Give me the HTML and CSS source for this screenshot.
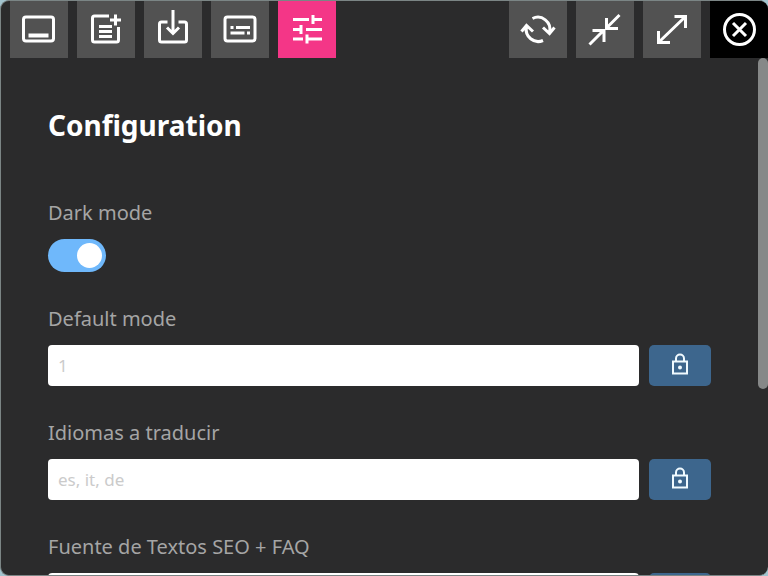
FILE: index.html
```
<!DOCTYPE html>
<html lang="en">
<head>
  <meta charset="UTF-8" />
  <meta name="viewport" content="width=device-width, initial-scale=1.0"/>
  <title>Configuration</title>
  <link rel="stylesheet" href="styles.css">
</head>
<body>
  <div class="window">
    <header class="toolbar">
      <button class="tool" aria-label="Panel">
        <svg viewBox="0 0 36 36"><rect x="2.5" y="7" width="30" height="24" rx="2.5"/><path class="thick" d="M7.500 25.5h20"/></svg>
      </button>
      <button class="tool" aria-label="New note">
        <svg viewBox="0 0 36 36"><path d="M21 6H6.500a2 2 0 0 0-2 2v22a2 2 0 0 0 2 2h22a2 2 0 0 0 2-2V17M11 16.500h13M11 21.500h13M11 26.500h13M27.500 4.500v11M22 10h11"/></svg>
      </button>
      <button class="tool" aria-label="Download">
        <svg viewBox="0 0 36 36"><path d="M12.500 12H6.500a2 2 0 0 0-2 2v16a2 2 0 0 0 2 2h23a2 2 0 0 0 2-2V14a2 2 0 0 0-2-2h-6M18 0v23M12 17.500l6 6 6-6"/></svg>
      </button>
      <button class="tool" aria-label="Subtitles">
        <svg viewBox="0 0 36 36"><rect x="3" y="7" width="30" height="24" rx="2.5"/><path d="M8.500 17.500h3M14 17.500h14M8.500 23h14M25 23h3"/></svg>
      </button>
      <button class="tool active" aria-label="Configuration">
        <svg viewBox="0 0 36 36"><path d="M4 9.500h16M24 5v9M24 9.500h9M4 19.500h8M12 15v9M17 19.500h16M4 29h10M18 24.500v9M18 29h15"/></svg>
      </button>
      <span class="spacer"></span>
      <button class="tool" aria-label="Refresh">
        <svg viewBox="0 0 36 36"><path d="M12.500 8.500A12 12 0 0 1 29.500 22M23 17.500l6.500 6 5-6M23 30.500A12 12 0 0 1 6.500 17M1.500 21.500l5-6 6.500 6"/></svg>
      </button>
      <button class="tool" aria-label="Shrink">
        <svg viewBox="0 0 36 36"><path d="M32.500 5L20 17.500M19.500 8v10.500H31M2.500 34.500l13-13M5.500 20.500H17V32"/></svg>
      </button>
      <button class="tool" aria-label="Expand">
        <svg viewBox="0 0 36 36"><path d="M5 32L31 7M20.500 6.500H31.500V18M4.500 21v11.500H16"/></svg>
      </button>
      <button class="tool close" aria-label="Close">
        <svg viewBox="0 0 36 36"><circle cx="18.500" cy="19.500" r="15"/><path d="M12 13l13 13M25 13L12 26"/></svg>
      </button>
    </header>

    <main class="content">
      <h1>Configuration</h1>
      <form>
        <div class="field">
          <label for="dark">Dark mode</label>
          <input type="checkbox" class="switch" id="dark" checked>
        </div>
        <div class="field">
          <label for="mode">Default mode</label>
          <div class="row">
            <input type="text" id="mode" placeholder="1">
            <button type="button" class="lock" aria-label="Lock">
              <svg viewBox="0 0 20 24"><path d="M3 9.500h14v12H3zM6 9.500V6.500a4 4 0 0 1 8 0v3"/><circle class="dot" cx="10" cy="15.500" r="2"/></svg>
            </button>
          </div>
        </div>
        <div class="field">
          <label for="langs">Idiomas a traducir</label>
          <div class="row">
            <input type="text" id="langs" placeholder="es, it, de">
            <button type="button" class="lock" aria-label="Lock">
              <svg viewBox="0 0 20 24"><path d="M3 9.500h14v12H3zM6 9.500V6.500a4 4 0 0 1 8 0v3"/><circle class="dot" cx="10" cy="15.500" r="2"/></svg>
            </button>
          </div>
        </div>
        <div class="field">
          <label for="source">Fuente de Textos SEO + FAQ</label>
          <div class="row">
            <input type="text" id="source">
            <button type="button" class="lock" aria-label="Lock"></button>
          </div>
        </div>
      </form>
      <div class="thumb"></div>
    </main>
  </div>
</body>
</html>
```
FILE: styles.css
```
* {
  box-sizing: border-box;
}

body {
  margin: 0;
  background: #a3c4cf;
  font-family: "Noto Sans", "Open Sans", sans-serif;
  color: #a5a5a5;
}

.window {
  height: 100vh;
  display: flex;
  flex-direction: column;
  overflow: hidden;
  background: #2b2b2c;
  border: 1px solid #7b8585;
  border-right: none;
  border-radius: 9px;
}

/* top bar */
.toolbar {
  display: flex;
  gap: 9px;
  padding-left: 9px;
}

.tool {
  width: 58px;
  height: 57px;
  padding: 0 0 4px;
  border: none;
  background: #525252;
  display: flex;
  align-items: center;
  justify-content: center;
  cursor: pointer;
}

.tool svg {
  width: 36px;
  height: 36px;
  fill: none;
  stroke: #fff;
  stroke-width: 3;
}

.tool .thick {
  stroke-width: 4;
}

.tool.active {
  background: #f43687;
}

.tool.close {
  background: #000;
}

.spacer {
  flex: 1;
}

/* settings */
.content {
  position: relative;
  flex: 1;
  min-height: 0;
  overflow: hidden;
  padding: 47px 57px 0 47px;
}

h1 {
  margin: 0 0 54px;
  font-size: 28px;
  line-height: 40px;
  color: #fff;
}

.field {
  margin-bottom: 33px;
}

label {
  display: block;
  margin-bottom: 12px;
  font-size: 20px;
  line-height: 28px;
}

.row {
  display: flex;
  gap: 10px;
}

input[type="text"] {
  flex: 1;
  min-width: 0;
  height: 41px;
  padding: 0 10px;
  border: none;
  border-radius: 4px;
  background: #fff;
  font-family: inherit;
  font-size: 17px;
}

input::placeholder {
  color: #cbcbcb;
}

.lock {
  width: 62px;
  height: 41px;
  padding: 0 0 3px;
  border: none;
  border-radius: 5px;
  background: #3d668d;
  display: flex;
  align-items: center;
  justify-content: center;
}

.lock svg {
  width: 20px;
  height: 24px;
  fill: none;
  stroke: #f0faff;
  stroke-width: 2;
}

.lock .dot {
  fill: #f0faff;
  stroke: none;
}

.switch {
  appearance: none;
  display: flex;
  align-items: center;
  width: 58px;
  height: 33px;
  margin: 0;
  padding: 0 4px;
  border-radius: 17px;
  background: #6b7785;
}

.switch::before {
  content: "";
  width: 25px;
  height: 25px;
  border-radius: 50%;
  background: #fff;
}

.switch:checked {
  justify-content: flex-end;
  background: #6fb8fb;
}

/* scroll position */
.thumb {
  position: absolute;
  top: 0;
  right: 0;
  width: 10px;
  height: 64%;
  border-radius: 5px;
  background: #868888;
}
```
